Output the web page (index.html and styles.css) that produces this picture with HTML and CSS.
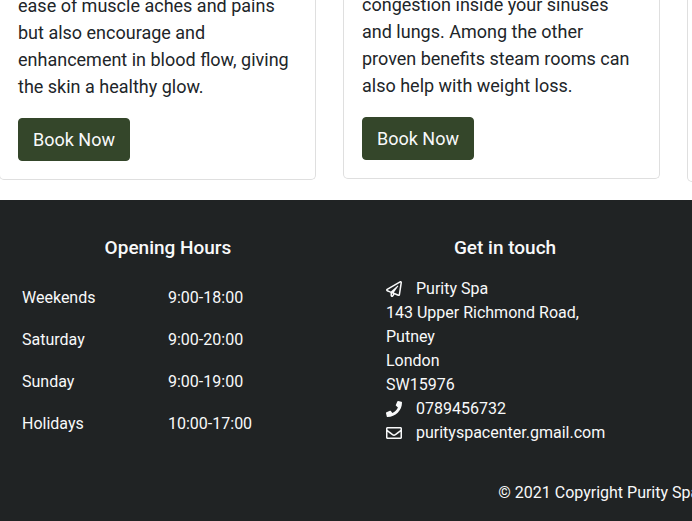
FILE: index.html
```html
<!DOCTYPE html>
<html lang="en">
<head>
<meta charset="utf-8">
<meta name="viewport" content="width=device-width, initial-scale=1">
<title>Purity Spa</title>
<link rel="stylesheet" href="styles.css">
</head>
<body>
<main class="treatments">
  <article class="card">
    <p class="card-text">ease of muscle aches and pains but also encourage and enhancement in blood flow, giving the skin a healthy glow.</p>
    <button class="btn" type="button">Book Now</button>
  </article>
  <article class="card card-short">
    <p class="card-text">congestion inside your sinuses and lungs. Among the other proven benefits steam rooms can also help with weight loss.</p>
    <button class="btn" type="button">Book Now</button>
  </article>
  <article class="card card-tall"></article>
</main>
<footer class="footer">
  <div class="footer-columns">
    <section>
      <h2 class="footer-title">Opening Hours</h2>
      <table class="hours">
        <tbody>
          <tr><th scope="row">Weekends</th><td>9:00-18:00</td></tr>
          <tr><th scope="row">Saturday</th><td>9:00-20:00</td></tr>
          <tr><th scope="row">Sunday</th><td>9:00-19:00</td></tr>
          <tr><th scope="row">Holidays</th><td>10:00-17:00</td></tr>
        </tbody>
      </table>
    </section>
    <section>
      <h2 class="footer-title">Get in touch</h2>
      <address class="contact">
        <div class="contact-line">
          <svg class="icon" viewBox="0 0 512 512" aria-hidden="true"><path d="M440 6.5L24 246.4c-34.4 19.9-31.1 70.8 5.7 85.9L144 379.6V464c0 46.4 59.2 65.5 86.6 28.6l43.8-59.1 111.9 46.2c5.9 2.4 12.1 3.6 18.3 3.6 8.2 0 16.3-2.1 23.6-6.2 12.8-7.2 21.6-20 23.9-34.5l59.4-387.2c6.1-40.1-36.9-68.8-71.5-48.9zM192 464v-64.6l36.6 15.1L192 464zm212.6-28.7l-153.8-63.5L391 169.5c10.7-15.5-9.5-33.5-23.7-21.2L155.8 332.6 48 288 464 48l-59.4 387.3z"/></svg>
          <span>Purity Spa</span>
        </div>
        <div>143 Upper Richmond Road,</div>
        <div>Putney</div>
        <div>London</div>
        <div>SW15976</div>
        <div class="contact-line">
          <svg class="icon" viewBox="0 0 512 512" aria-hidden="true"><path d="M493.4 24.6l-104-24c-11.3-2.6-22.9 3.3-27.5 13.9l-48 112c-4.2 9.8-1.4 21.3 6.9 28l60.6 49.6c-36 76.7-98.9 140.5-177.2 177.2l-49.6-60.6c-6.8-8.3-18.2-11.1-28-6.9l-112 48C3.9 366.5-2 378.1.6 389.4l24 104C27.1 504.2 36.7 512 48 512c256.1 0 464-207.5 464-464 0-11.2-7.7-20.9-18.6-23.4z"/></svg>
          <span>0789456732</span>
        </div>
        <div class="contact-line">
          <svg class="icon" viewBox="0 0 512 512" aria-hidden="true"><path d="M464 64H48C21.49 64 0 85.49 0 112v288c0 26.51 21.49 48 48 48h416c26.51 0 48-21.49 48-48V112c0-26.51-21.49-48-48-48zm0 48v40.805c-22.422 18.259-58.168 46.651-134.587 106.49-16.841 13.247-50.201 45.072-73.413 44.701-23.208.375-56.579-31.459-73.413-44.701C106.18 199.465 70.425 171.067 48 152.805V112h416zM48 400V214.398c22.914 18.251 55.409 43.862 104.938 82.646 21.857 17.205 60.134 55.186 103.062 54.955 42.717.231 80.509-37.199 103.053-54.947 49.528-38.783 82.032-64.401 104.947-82.653V400H48z"/></svg>
          <span>purityspacenter.gmail.com</span>
        </div>
      </address>
    </section>
  </div>
  <p class="copyright">© 2021 Copyright Purity Spa</p>
</footer>
</body>
</html>
```
FILE: styles.css
```css
* {
  box-sizing: border-box;
}

body {
  margin: 0;
  min-height: 100vh;
  display: flex;
  flex-direction: column;
  overflow: hidden;
  background: #fff;
  color: #212529;
  font-family: Roboto, "Liberation Sans", sans-serif;
  font-size: 16px;
  line-height: 24px;
}

/* Cards run past the right edge of the window. */
.treatments {
  display: grid;
  grid-template-columns: repeat(3, calc(50% - 30px));
  gap: 27px;
  align-items: start;
  margin: -8px -1px 0;
  padding-bottom: 20px;
}

.card {
  padding: 0 18px 18px;
  border: 1px solid #dfdfdf;
  border-top: 0;
  border-radius: 0 0 5px 5px;
  font-size: 18px;
  line-height: 27px;
}

.card-short {
  margin-top: -1px;
}

.card-tall {
  align-self: stretch;
  margin-bottom: -2px;
}

.card-text {
  margin: 0 0 18px;
}

.btn {
  display: block;
  padding: 7px 14px;
  border: 1px solid #34462a;
  border-radius: 4px;
  background: #34462a;
  color: #f8f9fa;
  font: inherit;
}

.footer {
  flex: 1;
  padding: 37px 0 16px;
  background: #202324;
  color: #f8f9fa;
}

.footer-columns {
  display: grid;
  grid-template-columns: 1fr 1fr;
  gap: 21px;
  padding: 0 29px 0 10px;
}

.footer-title {
  margin: 0 0 18px;
  font-size: 19px;
  font-weight: 500;
  line-height: 22px;
  text-align: center;
}

.hours {
  width: 100%;
  border-collapse: collapse;
  table-layout: fixed;
}

.hours th,
.hours td {
  padding: 9px 12px;
  font-weight: 400;
  text-align: left;
}

.hours th {
  width: 146px;
}

.contact {
  padding-left: 39px;
  font-style: normal;
}

.contact-line {
  display: flex;
  align-items: center;
  gap: 14px;
}

.icon {
  width: 16px;
  height: 16px;
  fill: currentColor;
}

.copyright {
  margin: 36px 0 0 72%;
  white-space: nowrap;
}
```
